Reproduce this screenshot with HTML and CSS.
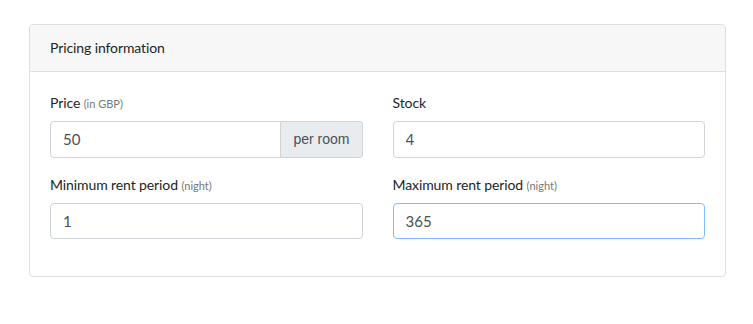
FILE: index.html
```html
<!DOCTYPE html>
<html lang="en">
<head>
	<meta charset="UTF-8">
	<title>Pricing information</title>
	<link rel="stylesheet" href="styles.css">
</head>
<body>
	<div class="page">
		<div class="card">
			<div class="card-header">Pricing information</div>
			<div class="card-body">
				<div class="row">
					<div class="form-group">
						<label>Price <small>(in GBP)</small></label>
						<div class="input-group">
							<input class="form-control" type="text" value="50">
							<span class="input-group-text">per room</span>
						</div>
					</div>
					<div class="form-group">
						<label>Stock</label>
						<input class="form-control" type="text" value="4">
					</div>
				</div>
				<div class="row">
					<div class="form-group">
						<label>Minimum rent period <small>(night)</small></label>
						<input class="form-control" type="text" value="1">
					</div>
					<div class="form-group">
						<label>Maximum rent period <small>(night)</small></label>
						<input class="form-control focus" type="text" value="365">
					</div>
				</div>
			</div>
		</div>
	</div>
</body>
</html>
```

FILE: styles.css
```css
*{
	padding: 0;
	margin: 0;
	box-sizing: border-box;
}
body{
	font-family: "Lato", "Liberation Sans", sans-serif;
	font-size: 14px;
	letter-spacing: -0.1px;
	line-height: 22px;
	color: #212529;
	background: #fff;
}
.page{
	padding: 24px 0 0 29px;
}
.card{
	width: 697px;
	border: 1px solid #dfdfdf;
	border-radius: 4px;
}
.card-header{
	padding: 12px 20px;
	background: #f7f7f7;
	border-bottom: 1px solid #dfdfdf;
	border-radius: 3px 3px 0 0;
}
.card-body{
	padding: 20px 20px 20.5px;
}
.row{
	display: grid;
	grid-template-columns: 1fr 1fr;
	column-gap: 30px;
}
.form-group{
	margin-bottom: 16px;
}
label{
	display: block;
	height: 22px;
	margin-bottom: 7px;
}
small{
	font-size: 11px;
	line-height: 0;
	letter-spacing: 0;
	color: #777;
}
.form-control{
	display: block;
	width: 100%;
	height: 36.5px;
	padding: 6px 12px;
	font-family: inherit;
	font-size: 15px;
	color: #495057;
	border: 1px solid #ced4da;
	border-radius: 4px;
	outline: none;
}
.form-control.focus{
	border-color: #80bdff;
}
.input-group{
	display: flex;
}
.input-group .form-control{
	flex: 1;
	border-radius: 4px 0 0 4px;
}
.input-group-text{
	display: flex;
	align-items: center;
	padding: 0 12px;
	font-family: "Liberation Sans", sans-serif;
	font-size: 14px;
	letter-spacing: 0;
	color: #495057;
	background: #e9ecef;
	border: 1px solid #ced4da;
	border-left: 0;
	border-radius: 0 4px 4px 0;
}
```
